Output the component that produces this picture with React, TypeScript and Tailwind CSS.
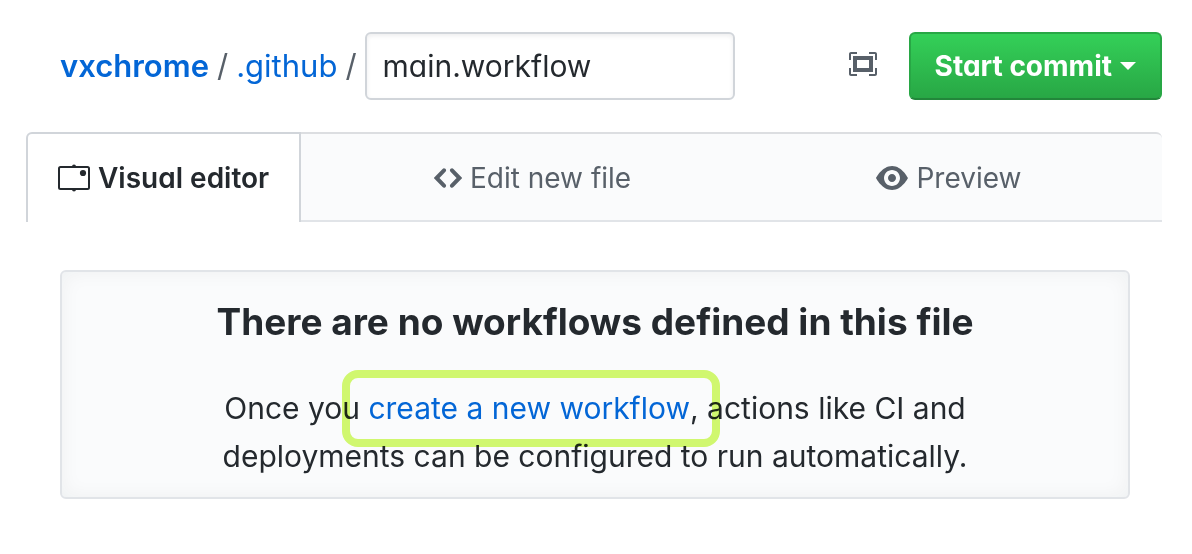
import React from "react";

function WorkflowIcon() {
  return (
    <svg className="h-8 w-8 shrink-0" viewBox="0 0 32 32" aria-hidden="true">
      <rect x="1" y="5" width="30" height="22" rx="1.5" fill="none" stroke="currentColor" strokeWidth="2" />
      <path d="M14 4.5a2 2 0 0 1 4 0zM14 27.5a2 2 0 0 0 4 0z" fill="currentColor" />
      <circle cx="25" cy="11" r="3.1" fill="currentColor" />
    </svg>
  );
}

function CodeIcon() {
  return (
    <svg className="h-8 w-7 shrink-0" viewBox="0 0 28 32" aria-hidden="true">
      <path
        d="M10 8.3 2.6 16l7.4 7.7M18 8.3l7.4 7.7-7.4 7.7"
        fill="none"
        stroke="currentColor"
        strokeWidth="4"
        strokeLinecap="round"
        strokeLinejoin="miter"
      />
    </svg>
  );
}

function EyeIcon() {
  return (
    <svg className="h-8 w-8 shrink-0" viewBox="0 0 16 16" fill="currentColor" aria-hidden="true">
      <path
        fillRule="evenodd"
        d="M8.06 2C3 2 0 8 0 8s3 6 8.06 6C13 14 16 8 16 8s-3-6-7.94-6zM8 12c-2.2 0-4-1.78-4-4 0-2.2 1.8-4 4-4 2.22 0 4 1.8 4 4 0 2.22-1.78 4-4 4zm2-4c0 1.11-.89 2-2 2-1.11 0-2-.89-2-2 0-1.11.89-2 2-2 1.11 0 2 .89 2 2z"
      />
    </svg>
  );
}

function ScreenFullIcon() {
  return (
    <svg className="h-8 w-7" viewBox="0 0 14 16" fill="currentColor" aria-hidden="true">
      <path
        fillRule="evenodd"
        d="M13 10h1v3c0 .547-.453 1-1 1h-3v-1h3v-3zM1 10H0v3c0 .547.453 1 1 1h3v-1H1v-3zm0-7h3V2H1c-.547 0-1 .453-1 1v3h1V3zm1 1h10v8H2V4zm2 6h6V6H4v4zm6-8v1h3v3h1V3c0-.547-.453-1-1-1h-3z"
      />
    </svg>
  );
}

export default function App() {
  return (
    <main className="bg-white pt-8 pr-[30px] pb-14 pl-[26px] font-['Inter',sans-serif] text-[#24292e]">
      <header className="flex items-center justify-between pl-[34px] [font-feature-settings:'cv11']">
        <div className="flex items-center gap-2 text-[31px] leading-[48px] text-[#586069]">
          <a href="#repo" className="font-semibold text-[#0366d6]">vxchrome</a>
          <span>/</span>
          <a href="#folder" className="text-[#0366d6]">.github</a>
          <span>/</span>
          <input
            aria-label="File name"
            defaultValue="main.workflow"
            className="h-[68px] w-[370px] rounded-md border-2 border-[#d1d5da] bg-white px-4 text-[30px] text-[#24292e] shadow-[inset_0_2px_4px_rgba(27,31,35,0.075)] outline-none"
          />
        </div>
        <div className="flex items-center gap-8">
          <button type="button" aria-label="Full screen" className="pb-1 text-[#586069]">
            <ScreenFullIcon />
          </button>
          <button
            type="button"
            className="flex h-[68px] items-center gap-2 rounded-md border-2 border-[#28a745] border-b-[#22863a] bg-linear-to-b from-[#34d058] to-[#28a745] px-6 text-[28px] font-bold text-white"
          >
            Start commit
            <span className="border-x-8 border-t-8 border-x-transparent border-t-white" />
          </button>
        </div>
      </header>

      <nav
        aria-label="Editor mode"
        className="mt-8 flex h-[90px] rounded-t-md bg-[#fafbfc] text-[28px] text-[#586069] [font-feature-settings:'cv11']"
      >
        <button
          type="button"
          className="flex items-center gap-2 rounded-tl-md border-2 border-b-0 border-[#d1d5da] bg-white px-[30px] font-semibold text-[#24292e]"
        >
          <WorkflowIcon />
          Visual editor
        </button>
        <div className="flex grow rounded-tr-md border-y-2 border-t-[#dcdee1] border-b-[#e1e4e8] pt-0.5 pr-7">
          <button type="button" className="flex flex-5 items-center justify-center gap-2">
            <CodeIcon />
            Edit new file
          </button>
          <button type="button" className="flex flex-4 items-center justify-center gap-2">
            <EyeIcon />
            Preview
          </button>
        </div>
      </nav>

      <section className="mt-12 mr-8 ml-[34px] rounded-md border-2 border-[#e1e4e8] bg-[#fafbfc] px-8 pt-5 pb-[17px] text-center shadow-[inset_0_0_20px_rgba(27,31,35,0.05)]">
        <h1 className="text-[37px] leading-[60px] font-bold">There are no workflows defined in this file</h1>
        <p className="mt-8 text-[30px] leading-[48px]">
          Once you{" "}
          <a href="#new" className="relative text-[#0366d6]">
            create a new workflow
            <span className="pointer-events-none absolute -top-5 -right-[30px] -bottom-[21px] -left-[26px] rounded-2xl border-8 border-[#d4fb70] mix-blend-multiply" />
          </a>
          , actions like CI and
          <br />
          deployments can be configured to run automatically.
        </p>
      </section>
    </main>
  );
}
